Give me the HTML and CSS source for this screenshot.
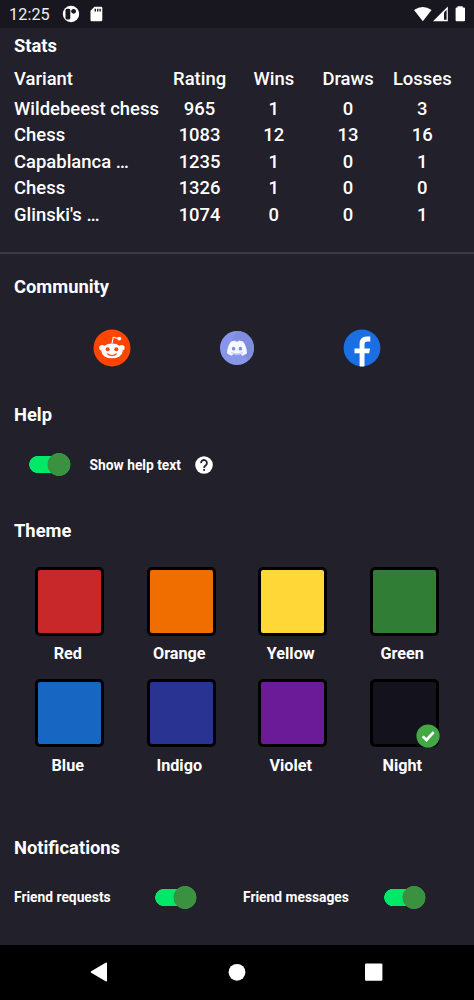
FILE: index.html
```html
<!DOCTYPE html>
<html lang="en">
<head>
<meta charset="utf-8">
<title>Settings</title>
<link rel="stylesheet" href="styles.css">
</head>
<body>
<div class="phone">
  <header class="status">
    <span class="clock">12:25</span>
    <svg class="status-app" width="18" height="18" viewBox="0 0 18 18"><circle cx="9" cy="9" r="8.2" fill="#fff"/><rect x="3.5" y="3.7" width="4.8" height="10.8" rx="1.5" fill="#18171f"/><circle cx="11.6" cy="6.3" r="2.4" fill="#18171f"/></svg>
    <svg class="status-sd" width="13" height="16" viewBox="0 0 13 16"><path d="M4.5.7H11Q12.3.7 12.3 2V14Q12.3 15.3 11 15.3H1.8Q.5 15.3.5 14V4.7Z" fill="#fff"/><path d="M4.6 2.7H6V5.5H4.6ZM7 2.7H8.4V5.5H7ZM9.4 2.7H10.8V5.5H9.4Z" fill="#18171f"/></svg>
    <svg class="status-right" width="54" height="18" viewBox="0 0 54 18"><path d="M0 5Q8.8-1 17.6 5L8.8 16.2Z" fill="#fff"/><path d="M19 16.2 33.8 1.5V16.2Z" fill="#fff"/><path d="M30 7.4 32.6 4.8V14.8H30Z" fill="#18171f"/><path d="M43.5 1.2H48.7V2.4H50Q51 2.4 51 3.4V15.2Q51 16.2 50 16.2H42.6Q41.6 16.2 41.6 15.2V3.4Q41.6 2.4 42.6 2.4H43.5Z" fill="#fff"/></svg>
  </header>

  <main>
    <section class="stats">
      <h2>Stats</h2>
      <div class="row head"><span>Variant</span><span>Rating</span><span>Wins</span><span>Draws</span><span>Losses</span></div>
      <div class="row"><span>Wildebeest chess</span><span>965</span><span>1</span><span>0</span><span>3</span></div>
      <div class="row"><span>Chess</span><span>1083</span><span>12</span><span>13</span><span>16</span></div>
      <div class="row"><span>Capablanca …</span><span>1235</span><span>1</span><span>0</span><span>1</span></div>
      <div class="row"><span>Chess</span><span>1326</span><span>1</span><span>0</span><span>0</span></div>
      <div class="row"><span>Glinski's …</span><span>1074</span><span>0</span><span>0</span><span>1</span></div>
    </section>

    <section class="community">
      <h2>Community</h2>
      <div class="socials">
        <svg width="38" height="38" viewBox="0 0 38 38"><circle cx="19" cy="19" r="18.5" fill="#ff4500"/><path d="M19 14.5 20.2 8.3 25 9.4" fill="none" stroke="#fff" stroke-width="1.1"/><circle cx="26.3" cy="9.6" r="1.9" fill="#fff"/><circle cx="9" cy="18.7" r="2.8" fill="#fff"/><circle cx="28.8" cy="18.7" r="2.8" fill="#fff"/><ellipse cx="19" cy="21.9" rx="10.7" ry="7.4" fill="#fff"/><circle cx="14.7" cy="20.2" r="2" fill="#ff4500"/><circle cx="23.3" cy="20.2" r="2" fill="#ff4500"/><path d="M14.7 25Q19 28 23.3 25" fill="none" stroke="#ff4500" stroke-width="1.2" stroke-linecap="round"/></svg>
        <svg width="38" height="38" viewBox="0 0 38 38"><circle cx="19" cy="19" r="17" fill="#8796ea"/><path d="M19 2A17 17 0 0 1 36 19 17 17 0 0 1 31 31L12.3 13.6Z" fill="#7f8de0"/><path d="M13 12.5 17 11.4 17.6 12.6H20.4L21 11.4 25 12.5Q28.8 17.5 29 24.3 26.8 26.3 24 26.7L22.9 24.9Q19 26 15.1 24.9L14 26.7Q11.2 26.3 9 24.3 9.2 17.5 13 12.5Z" fill="#f6f8ff"/><ellipse cx="15.6" cy="19.7" rx="1.7" ry="1.9" fill="#7f8de2"/><ellipse cx="22.4" cy="19.7" rx="1.7" ry="1.9" fill="#7f8de2"/><path d="M13 23.7Q19 26 25 23.7" fill="none" stroke="#a9b4ee" stroke-width=".7"/></svg>
        <svg width="38" height="38" viewBox="0 0 38 38"><circle cx="19" cy="19" r="18.4" fill="#1b6fe5"/><path d="M16.6 37.2V24.2H11.5V19.4H16.6V15Q16.6 7.5 23.6 7.5H27.3V12.4H24.2Q21.5 12.4 21.5 15.1V19.4H27L26.2 24.2H21.5V37.2Q19 37.6 16.6 37.2Z" fill="#fff"/></svg>
      </div>
    </section>

    <section class="help">
      <h2>Help</h2>
      <div class="help-row">
        <span class="switch"></span>
        <span class="label">Show help text</span>
        <svg width="18" height="18" viewBox="0 0 18 18"><circle cx="9" cy="9" r="8.8" fill="#fff"/><path d="M6.1 7.1A2.9 2.9 0 1 1 10.8 9.2Q9.1 10.3 9.1 12" fill="none" stroke="#22202a" stroke-width="1.8"/><rect x="8.2" y="13" width="1.8" height="1.8" fill="#22202a"/></svg>
      </div>
    </section>

    <section class="theme">
      <h2>Theme</h2>
      <div class="swatches">
        <div class="swatch"><i class="tile red"></i><span>Red</span></div>
        <div class="swatch"><i class="tile orange"></i><span>Orange</span></div>
        <div class="swatch"><i class="tile yellow"></i><span>Yellow</span></div>
        <div class="swatch"><i class="tile green"></i><span>Green</span></div>
        <div class="swatch"><i class="tile blue"></i><span>Blue</span></div>
        <div class="swatch"><i class="tile indigo"></i><span>Indigo</span></div>
        <div class="swatch"><i class="tile violet"></i><span>Violet</span></div>
        <div class="swatch"><i class="tile night"><svg class="check" width="24" height="24" viewBox="0 0 24 24"><circle cx="12" cy="12" r="11.6" fill="#43a947"/><path d="M6.7 12.4 10.4 16 17.7 8.2" fill="none" stroke="#fff" stroke-width="2.7"/></svg></i><span>Night</span></div>
      </div>
    </section>

    <section class="notifications">
      <h2>Notifications</h2>
      <div class="notify-row">
        <div class="notify"><span class="label">Friend requests</span><span class="switch"></span></div>
        <div class="notify"><span class="label">Friend messages</span><span class="switch"></span></div>
      </div>
    </section>
  </main>

  <nav class="navbar">
    <svg width="18" height="20" viewBox="0 0 18 20"><path d="M1.2 9.2 15.6.8Q17 .2 17 1.6V18.4Q17 19.8 15.6 19.2L1.2 10.8Q0 10 1.2 9.2Z" fill="#fff"/></svg>
    <svg width="18" height="18" viewBox="0 0 18 18"><circle cx="9" cy="9.3" r="8.4" fill="#fff"/></svg>
    <svg width="18" height="18" viewBox="0 0 18 18"><rect x="0" y=".4" width="17.4" height="17.4" rx="1.2" fill="#fff"/></svg>
  </nav>
</div>
</body>
</html>
```
FILE: styles.css
```css
* { box-sizing: border-box; }
body { margin: 0; background: #22202a; color: #fff; font-family: Roboto, "Liberation Sans", sans-serif; }
svg { display: block; flex: none; }
.phone { width: 474px; height: 1000px; display: flex; flex-direction: column; overflow: hidden; }
.status { height: 28px; flex: none; background: #18171f; display: flex; align-items: center; padding-left: 9px; }
.clock { width: 53px; font-size: 16.2px; letter-spacing: .1px; line-height: 28px; padding-top: 1px; color: #eee; }
.status-sd { margin-left: 10px; }
.status-right { margin-left: auto; margin-right: 6px; margin-top: -1px; }
main { flex: 1; }
section { padding: 0 14px; }
h2 { margin: 0; font-size: 18.35px; line-height: 24px; font-weight: 700; }

.stats { height: 226px; padding-top: 6px; border-bottom: 2px solid #3b3941; }
.row { display: grid; grid-template-columns: 2fr 1fr 1fr 1fr 1fr; margin-right: .6px; font-size: 18.45px; font-weight: 500; line-height: 26.5px; white-space: nowrap; }
.row span { text-align: center; }
.row span:first-child { text-align: left; }
.head { margin-top: 8px; margin-bottom: 3px; }

.community { height: 127px; padding-top: 21px; }
.socials { display: flex; justify-content: space-between; padding: 30px 79px 0 78.5px; }

.help { height: 116px; padding-top: 22px; }
.help-row { display: flex; align-items: center; height: 28px; margin-top: 23.5px; padding-left: 14.6px; }
.help-row .label { width: 105px; margin-left: 19px; }
.label { font-size: 13.8px; font-weight: 700; line-height: 20px; white-space: nowrap; }
.switch { width: 42px; height: 23px; flex: none; background: radial-gradient(circle at 30px 11.5px, #3a9140 11.2px, transparent 11.8px), linear-gradient(#00e868, #00e868) 9px 3px / 24px 17px no-repeat, radial-gradient(circle at 8.7px 11.5px, #00e868 8.2px, transparent 8.8px); }

.theme { height: 317px; padding-top: 22px; }
.swatches { display: grid; grid-template-columns: repeat(4, 1fr); grid-auto-rows: 111.5px; margin-top: 24.3px; }
.swatch { display: flex; flex-direction: column; align-items: center; }
.tile { position: relative; width: 68.6px; height: 68.6px; border: 3px solid #000; border-radius: 5px; }
.swatch span { margin: 8.2px 4px 0 0; font-size: 16.2px; font-weight: 700; line-height: 20px; }
.red { background: #c9282b; }
.orange { background: #f06e00; }
.yellow { background: #ffd737; }
.green { background: #307d35; }
.blue { background: #1666c2; }
.indigo { background: #293392; }
.violet { background: #6b1a98; }
.night { background: #14121d; }
.check { position: absolute; right: -4.2px; bottom: -3.4px; }

.notifications { padding-top: 22px; }
.notify-row { display: flex; height: 24px; margin-top: 25px; }
.notify { display: flex; justify-content: space-between; align-items: center; width: 183px; }
.notify + .notify { margin-left: 46px; }

.navbar { height: 55px; flex: none; background: #000; display: flex; align-items: center; justify-content: space-between; padding: 0 91px 1px 90px; }
```
